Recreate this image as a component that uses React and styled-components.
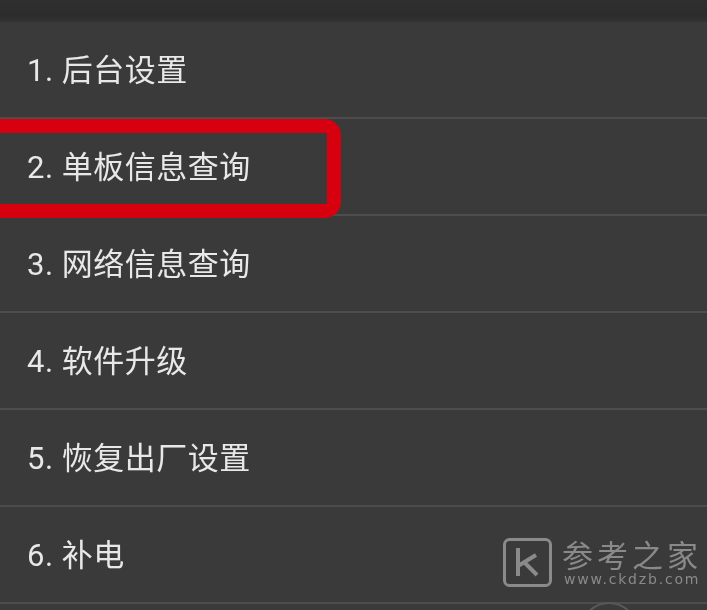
import React from "react";
import styled, { createGlobalStyle } from "styled-components";

const Global = createGlobalStyle`
  html, body { margin: 0; padding: 0; background: #3a3a3a; }
`;
const Page = styled.div`
  position: relative;
  width: 707px;
  height: 610px;
  overflow: hidden;
  background: #3a3a3a;
  font-family: Roboto, "Noto Sans CJK SC", sans-serif;
  filter: blur(0.35px);
`;
const TopBar = styled.div`
  height: 22px;
  background: linear-gradient(#2f2f2f, #2c2c2c 70%, #333333);
`;
const Row = styled.div`
  box-sizing: border-box;
  height: 97px;
  display: flex;
  align-items: center;
  padding: 2px 0 0 27px;
  border-bottom: 2px solid #4d4d4d;
  color: #e8e8e8;
  font-size: 31px;
  line-height: 40px;
  letter-spacing: 0.5px;
  white-space: pre;
`;
const Highlight = styled.div`
  position: absolute;
  left: -20px;
  top: 119px;
  box-sizing: border-box;
  width: 361px;
  height: 99px;
  border: 14px solid #d6000f;
  border-radius: 16px;
`;
const Watermark = styled.div`
  position: absolute;
  left: 503px;
  top: 538px;
  display: flex;
  gap: 9px;
  color: #8a8a8a;
`;
const WatermarkText = styled.div`
  display: flex;
  flex-direction: column;
  gap: 1px;
`;
const WatermarkTitle = styled.div`
  font-family: "Noto Sans CJK SC", sans-serif;
  font-size: 31px;
  font-weight: 400;
  line-height: 31px;
  letter-spacing: 4px;
`;
const WatermarkUrl = styled.div`
  font-family: "DejaVu Sans", sans-serif;
  font-size: 14px;
  line-height: 18px;
  letter-spacing: 1.8px;
  padding-left: 2px;
`;
const Arc = styled.div`
  position: absolute;
  left: 580px;
  top: 602px;
  width: 58px;
  height: 58px;
  box-sizing: border-box;
  border: 2px solid #585858;
  border-radius: 50%;
`;

const items = ["1. 后台设置", "2. 单板信息查询", "3. 网络信息查询", "4. 软件升级", "5. 恢复出厂设置", "6. 补电"];

export default function App() {
  return (
    <Page>
      <Global />
      <TopBar />
      {items.map((t) => (
        <Row key={t}>{t}</Row>
      ))}
      <Highlight />
      <Arc />
      <Watermark>
        <svg width="50" height="50" viewBox="0 0 50 50" fill="none" stroke="#8a8a8a">
          <rect x="1.5" y="1.5" width="46" height="46" rx="5" strokeWidth="3" />
          <path d="M15 10V38M15 28L33 17M21 24L34 37" strokeWidth="4" />
        </svg>
        <WatermarkText>
          <WatermarkTitle>参考之家</WatermarkTitle>
          <WatermarkUrl>www.ckdzb.com</WatermarkUrl>
        </WatermarkText>
      </Watermark>
    </Page>
  );
}
